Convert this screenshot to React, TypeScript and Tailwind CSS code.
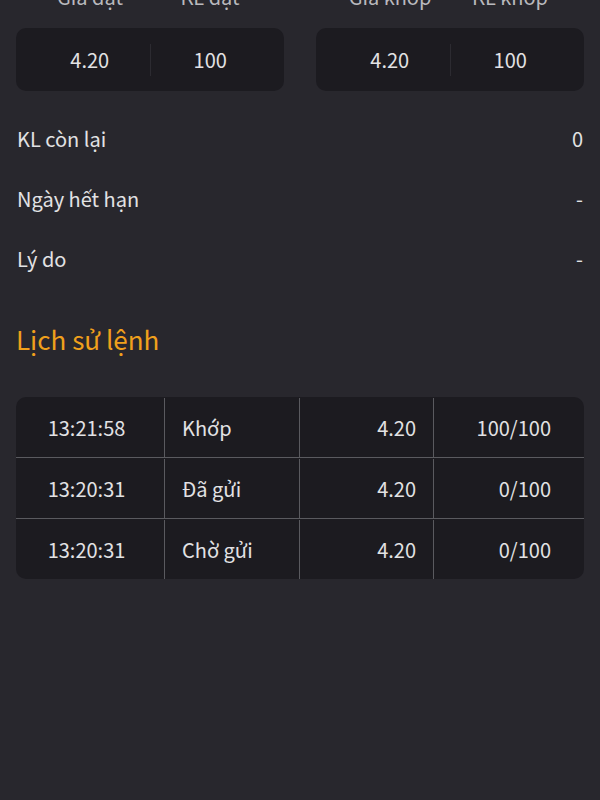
const font = { fontFamily: '"Noto Sans CJK SC", "Noto Sans", sans-serif' };

const summary = [
  [
    { label: 'Giá đặt', value: '4.20' },
    { label: 'KL đặt', value: '100' },
  ],
  [
    { label: 'Giá khớp', value: '4.20' },
    { label: 'KL khớp', value: '100' },
  ],
];

const details = [
  { label: 'KL còn lại', value: '0' },
  { label: 'Ngày hết hạn', value: '-' },
  { label: 'Lý do', value: '-' },
];

const history = [
  { time: '13:21:58', status: 'Khớp', price: '4.20', qty: '100/100' },
  { time: '13:20:31', status: 'Đã gửi', price: '4.20', qty: '0/100' },
  { time: '13:20:31', status: 'Chờ gửi', price: '4.20', qty: '0/100' },
];

export default function App() {
  return (
    <div className="min-h-[800px] w-[600px] overflow-hidden bg-[#28272d] text-[#e2e2e4]" style={font}>
      <div className="px-4">
        {/* Order summary */}
        <div className="grid grid-cols-2 gap-8">
          {summary.map((group, gi) => (
            <div key={gi}>
              <div className="-mt-[18px] flex h-[30px] items-center px-[14px] text-[20px] leading-none text-[#b9b9bd]">
                {group.map(c => (
                  <div key={c.label} className="flex-1 text-center">{c.label}</div>
                ))}
              </div>
              <div className="mt-4 flex h-[63px] items-center rounded-[10px] bg-[#1c1b20] px-[14px]">
                {group.map((c, i) => (
                  <div
                    key={c.label}
                    className={`flex h-8 flex-1 items-center justify-center text-[20px] ${i === 1 ? 'border-l border-[#2c2b31]' : ''}`}
                  >
                    {c.value}
                  </div>
                ))}
              </div>
            </div>
          ))}
        </div>

        {/* Details */}
        <div className="mt-[18px]">
          {details.map(d => (
            <div key={d.label} className="flex h-[60px] items-center justify-between text-[20px]">
              <span className="pl-px">{d.label}</span>
              <span className="pr-px">{d.value}</span>
            </div>
          ))}
        </div>

        <h2 className="mt-[32px] text-[26px] leading-[36px] text-[#f0a01c]">Lịch sử lệnh</h2>

        {/* History table */}
        <div className="mt-[40px] overflow-hidden rounded-[10px] bg-[#1c1b20] text-[20px]">
          {history.map((h, i) => (
            <div
              key={i}
              className={`grid h-[61px] grid-cols-[149px_135px_134px_1fr] pt-px last:h-[60px] ${i < history.length - 1 ? 'border-b border-[#5a5a5f]' : ''}`}
            >
              <div className="flex items-center justify-center border-r border-[#5a5a5f] pr-[7px]">{h.time}</div>
              <div className="flex items-center border-r border-[#5a5a5f] pl-[17px]">{h.status}</div>
              <div className="flex items-center justify-end border-r border-[#5a5a5f] pr-[17px]">{h.price}</div>
              <div className="flex items-center justify-end pr-[33px]">{h.qty}</div>
            </div>
          ))}
        </div>
      </div>
    </div>
  );
}
